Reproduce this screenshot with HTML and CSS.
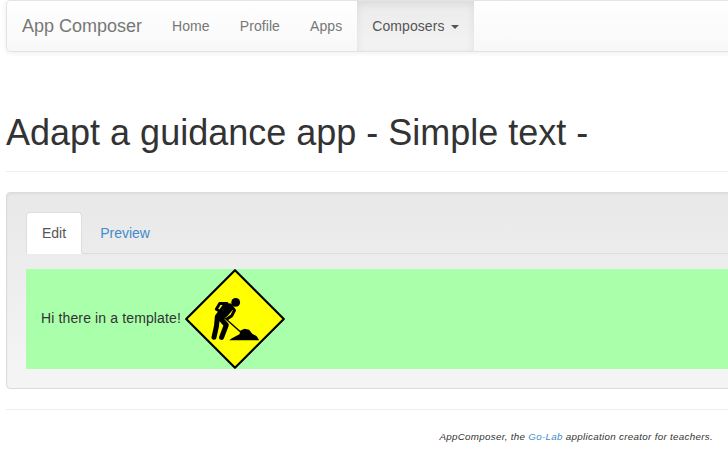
FILE: index.html
```html
<!DOCTYPE html>
<html lang="en">
<head>
<meta charset="utf-8">
<title>App Composer</title>
<link rel="stylesheet" href="styles.css">
</head>
<body>
<div class="container">
  <nav class="navbar">
    <a class="brand">App Composer</a>
    <a class="nav-link">Home</a>
    <a class="nav-link">Profile</a>
    <a class="nav-link">Apps</a>
    <a class="nav-link active">Composers <span class="caret"></span></a>
  </nav>
  <h1>Adapt a guidance app - Simple text -</h1>
  <hr>
  <main class="well">
    <div class="tabs">
      <a class="tab selected">Edit</a>
      <a class="tab">Preview</a>
    </div>
    <div class="template">
      <span>Hi there in a template!</span>
      <svg class="sign" viewBox="0 0 100 100" role="img" aria-label="Under construction">
        <path d="M50 1.2 98.8 50 50 98.8 1.2 50Z" fill="#ff0" stroke="#000" stroke-width="2.2" stroke-linejoin="round"/>
        <circle cx="50.7" cy="33.4" r="4.4"/>
        <path d="M39 34 46 34.5 48.5 40 42.5 47 37.5 51 30 51 29.8 47Z"/>
        <g fill="none" stroke="#000" stroke-linecap="round" stroke-linejoin="round">
          <path d="M42 34.5H34.7L31.3 40.2 33.6 41.5" stroke-width="2.9"/>
          <path d="M46 36.5 49.5 41.3 46.8 46.7 42.3 49.8" stroke-width="3"/>
          <path d="M32.3 49 31.5 57 29 68.3M35.5 49.5 41.3 56 36.6 68.3" stroke-width="5"/>
        </g>
        <path d="M39 48.2 57 64.3" fill="none" stroke="#000" stroke-width="1.4"/>
        <path d="M44.2 71.2 46.5 69.5 52.5 66.3 54.5 65.3 55.5 61.5 59.5 59.7 64 60.7 67.5 65 71.5 67 74.2 71.2Z"/>
      </svg>
    </div>
  </main>
  <hr>
  <footer>AppComposer, the <a>Go-Lab</a> application creator for teachers.</footer>
</div>
</body>
</html>
```
FILE: styles.css
```css
* { box-sizing: border-box; }
body {
  margin: 0;
  overflow: hidden;
  background: #fff;
  color: #333;
  font: 14px/20px "Liberation Sans", Arial, sans-serif;
}
.container { width: 750px; margin-left: 6px; }
.navbar {
  display: flex;
  height: 52px;
  border: 1px solid #e3e3e3;
  border-radius: 4px;
  background: linear-gradient(#fff, #f8f8f8);
  box-shadow: inset 0 1px 0 rgba(255,255,255,.15), 0 1px 5px rgba(0,0,0,.075);
}
.brand, .nav-link { padding: 15px; color: #777; white-space: nowrap; }
.brand { font-size: 18px; }
.nav-link { letter-spacing: .08px; }
.nav-link.active {
  color: #555;
  background: linear-gradient(#ebebeb, #f3f3f3);
  box-shadow: inset 0 3px 9px rgba(0,0,0,.075);
}
.caret {
  display: inline-block;
  margin-left: 2px;
  vertical-align: middle;
  border-top: 4px solid #555;
  border-right: 4px solid transparent;
  border-left: 4px solid transparent;
}
h1 { margin: 61px 0 0; font-size: 36px; line-height: 40px; font-weight: 500; }
hr { margin: 18px 0 20px; border: 0; border-top: 1px solid #eee; }
.well {
  height: 197px;
  padding: 19px;
  border: 1px solid #dcdcdc;
  border-radius: 4px;
  background: linear-gradient(#e8e8e8, #f5f5f5);
  box-shadow: inset 0 1px 3px rgba(0,0,0,.05), 0 1px 0 rgba(255,255,255,.1);
}
.well + hr { margin-top: 20px; }
.tabs { display: flex; height: 42px; border-bottom: 1px solid #ddd; }
.tab {
  height: 42px;
  margin-right: 2px;
  padding: 10px 15px;
  border: 1px solid transparent;
  border-radius: 4px 4px 0 0;
  color: #428bca;
}
.selected { color: #555; background: #fff; border-color: #ddd #ddd transparent; }
.template {
  display: flex;
  align-items: center;
  gap: 4px;
  height: 100px;
  margin-top: 15px;
  padding-left: 15px;
  background: #afa;
}
.template span { position: relative; top: -1px; letter-spacing: .13px; }
.sign { width: 100px; height: 100px; }
footer {
  width: 707px;
  font-size: 9.8px;
  line-height: 14px;
  font-style: italic;
  letter-spacing: .3px;
  text-align: right;
}
footer a { color: #428bca; }
```
